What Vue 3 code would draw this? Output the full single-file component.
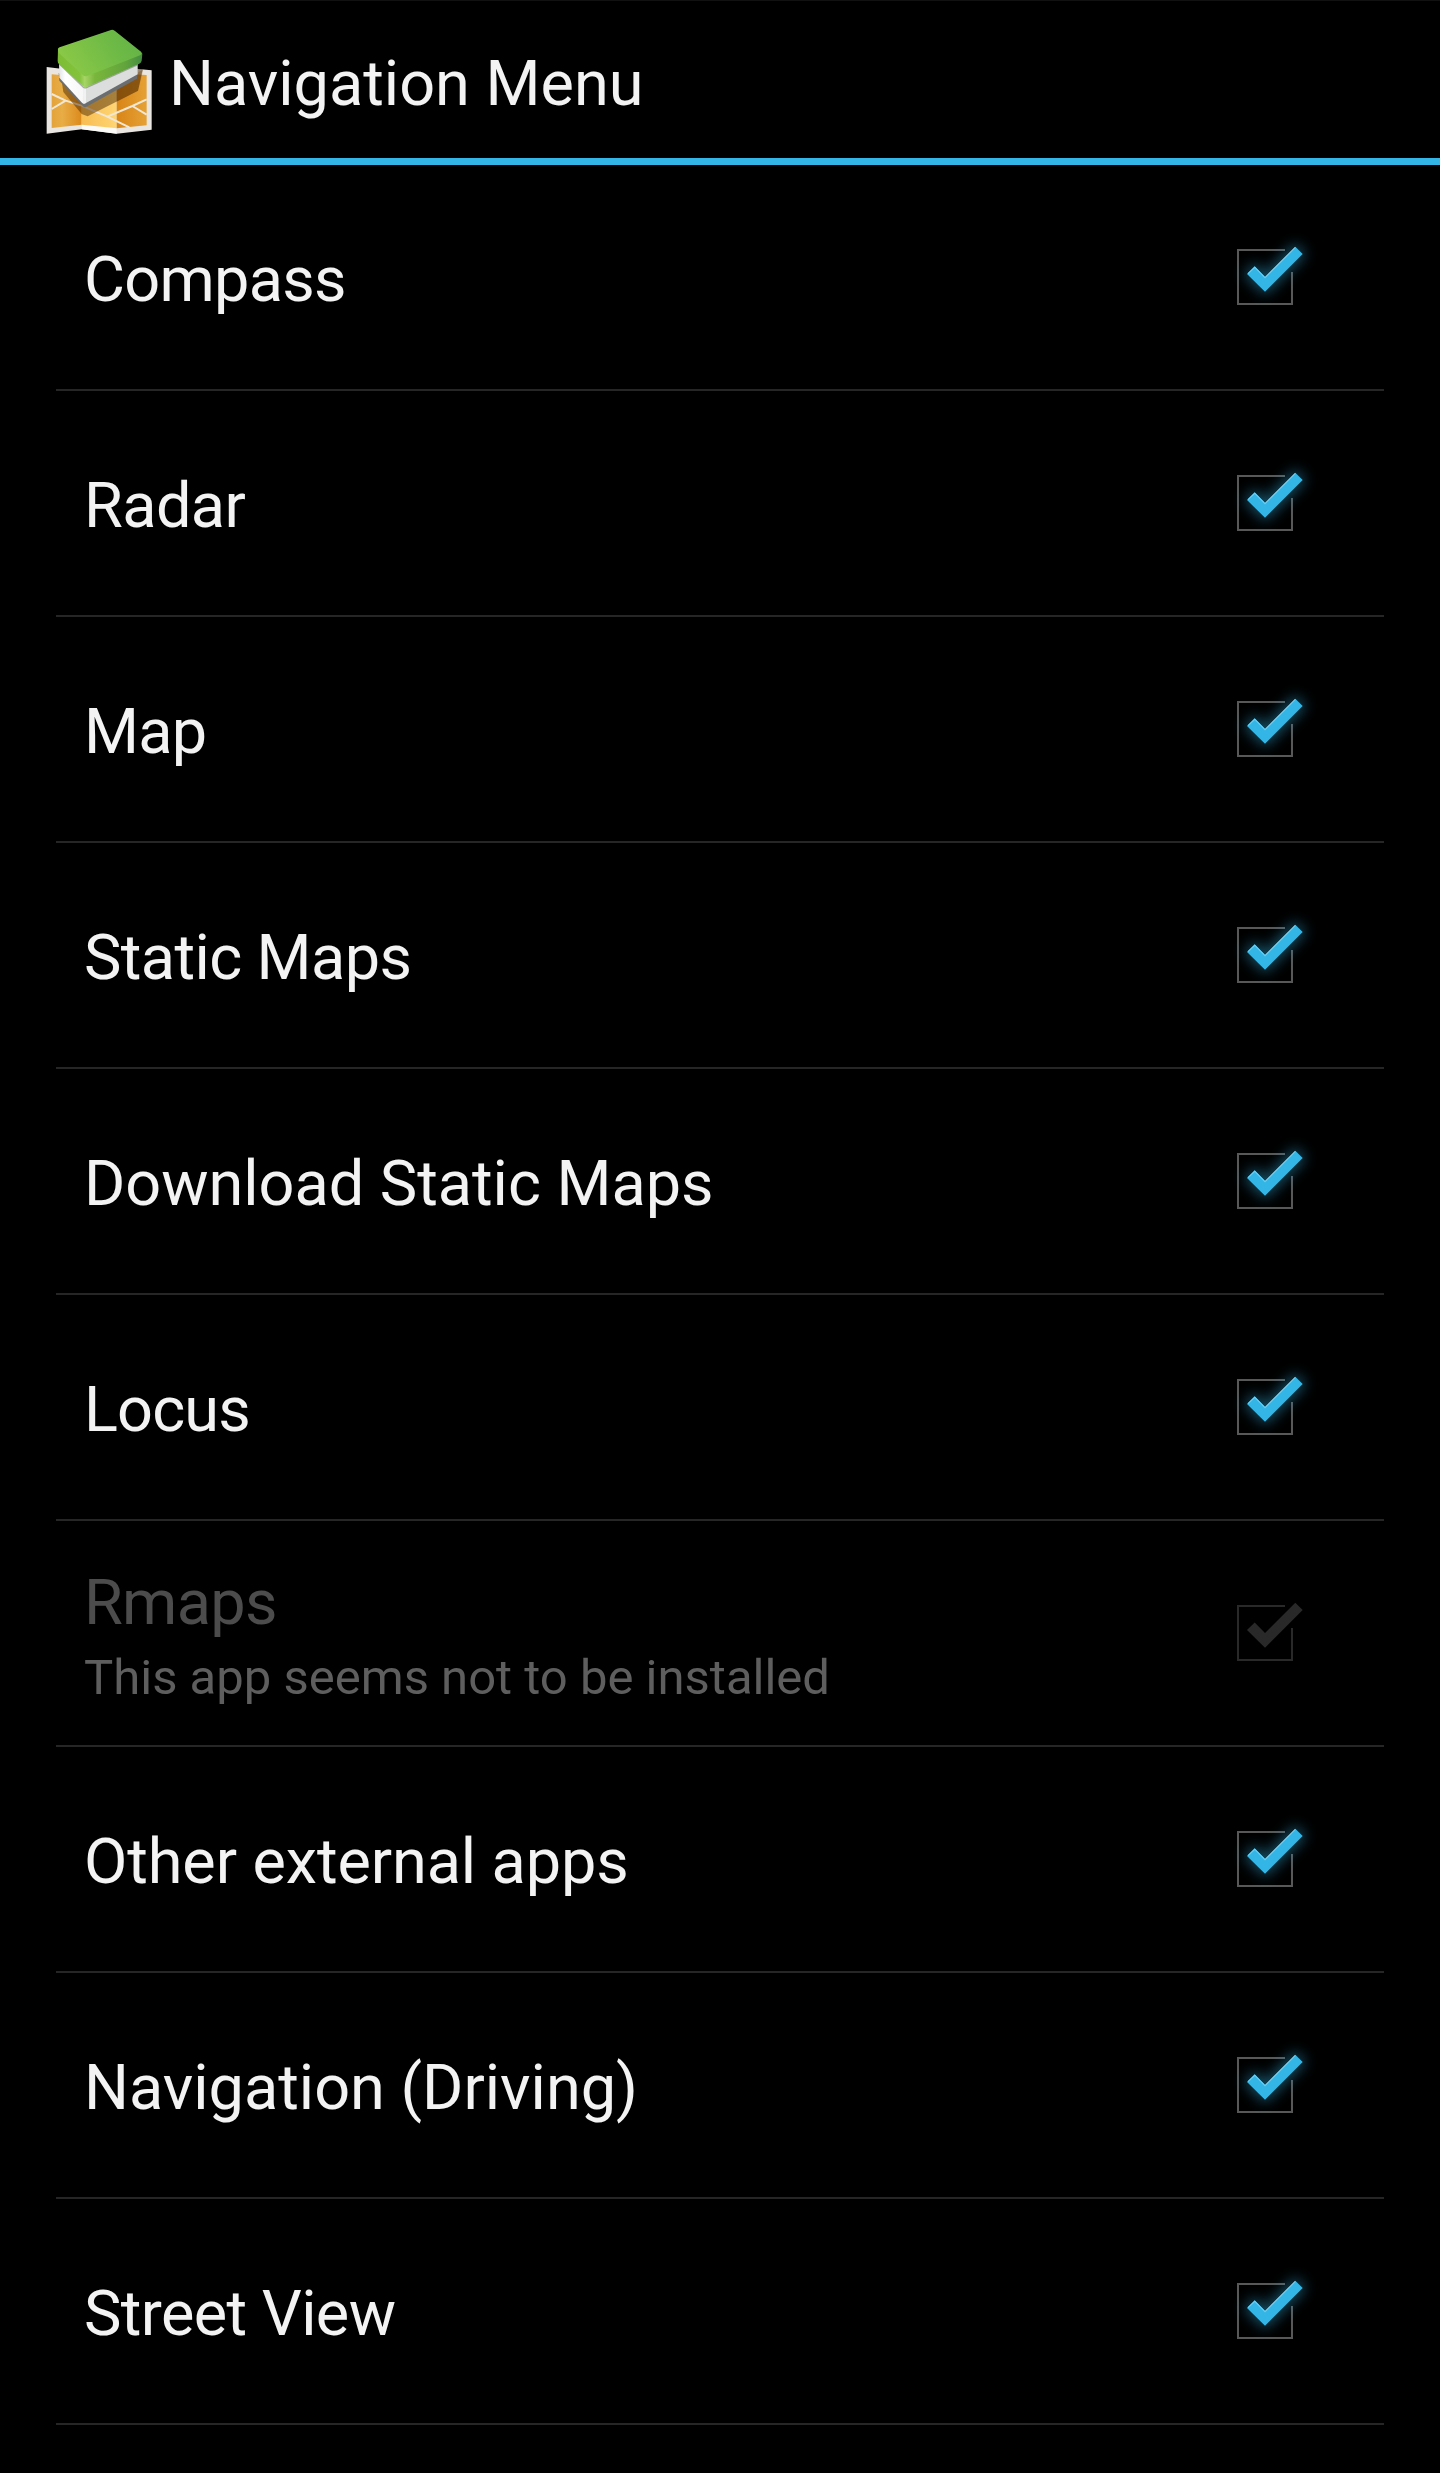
<script setup>
const items = [
  { title: 'Compass', tracking: -0.72 },
  { title: 'Radar', tracking: -0.6 },
  { title: 'Map', tracking: -0.7 },
  { title: 'Static Maps', tracking: -0.6 },
  { title: 'Download Static Maps', tracking: -0.03 },
  { title: 'Locus', tracking: -0.85 },
  { title: 'Rmaps', summary: 'This app seems not to be installed', disabled: true, tracking: -0.7 },
  { title: 'Other external apps', tracking: -0.1 },
  { title: 'Navigation (Driving)', tracking: 0 },
  { title: 'Street View', tracking: -0.6 },
]
</script>

<template>
  <div class="screen">
    <header class="bar">
      <svg class="logo" viewBox="30 30 360 360" aria-hidden="true">
        <defs>
          <linearGradient id="top" x1="0" y1="0.6" x2="1" y2="0.2">
            <stop offset="0" stop-color="#8cc947" />
            <stop offset="0.6" stop-color="#70bb46" />
            <stop offset="1" stop-color="#62b246" />
          </linearGradient>
          <linearGradient id="greenLeft" x1="0" y1="0" x2="1" y2="0">
            <stop offset="0" stop-color="#7cbd35" />
            <stop offset="0.75" stop-color="#84c23c" />
            <stop offset="1" stop-color="#b4de78" />
          </linearGradient>
          <linearGradient id="greenRight" x1="0" y1="0" x2="1" y2="0">
            <stop offset="0" stop-color="#a8d668" />
            <stop offset="0.18" stop-color="#7ab63c" />
            <stop offset="0.7" stop-color="#62a53c" />
            <stop offset="1" stop-color="#458d42" />
          </linearGradient>
          <linearGradient id="pages" x1="0" y1="0" x2="1" y2="0">
            <stop offset="0" stop-color="#e2e4e5" />
            <stop offset="0.25" stop-color="#ffffff" />
            <stop offset="1" stop-color="#f6f6f6" />
          </linearGradient>
          <linearGradient id="foldLeft" x1="0" y1="0" x2="1" y2="0">
            <stop offset="0" stop-color="#e4a33a" />
            <stop offset="0.35" stop-color="#e8ad46" />
            <stop offset="1" stop-color="#dc8a1b" />
          </linearGradient>
          <linearGradient id="foldMid" x1="0" y1="0" x2="1" y2="0">
            <stop offset="0" stop-color="#f7bd52" />
            <stop offset="1" stop-color="#ffd573" />
          </linearGradient>
          <linearGradient id="foldRight" x1="0" y1="0" x2="1" y2="0">
            <stop offset="0" stop-color="#d98516" />
            <stop offset="1" stop-color="#e5a136" />
          </linearGradient>
        </defs>
        <path d="M50 171L155 184L260 171L365 181V359L260 371L155 358L50 371Z" fill="#e9e6e1" />
        <path d="M155 184L260 171V371L155 358Z" fill="#fbfaf7" />
        <path d="M65 193L155 200V344L65 354Z" fill="url(#foldLeft)" />
        <path d="M155 200L260 190V355L155 344Z" fill="url(#foldMid)" />
        <path d="M260 190L350 195V346L260 355Z" fill="url(#foldRight)" />
        <path d="M65 252L107 272L155 287L232 320L298 352M65 297L107 272M232 320L307 288L350 268M307 288L350 314" fill="none" stroke="#f1e7d6" stroke-width="6" />
        <path d="M94 206L162 281L318 190L322 176L338 178L324 242L173 319L155 312L100 246Z" fill="#4d2c05" fill-opacity="0.5" />
        <path d="M260 228L340 178L324 242L260 275Z" fill="#6b3900" fill-opacity="0.3" />
        <path d="M86 188L163 268L323 178L321 206L168 291Q163 293 159 289L88 212Z" fill="#6a6e71" />
        <path d="M87 156L162 228V281Q159 281 156 278L88 203Z" fill="url(#pages)" />
        <path d="M161 228L323 154V193L168 279Q164 282 161 281Z" fill="#dcdede" />
        <path d="M161 230V281L168 279V230Z" fill="#f0f1f1" />
        <path d="M88 162L160 232Q164 235 171 232L322 165" fill="none" stroke="#777b78" stroke-opacity="0.6" stroke-width="4" />
        <path d="M84 116L158 191L171 195V231Q165 234 159 229L86 161Q83 158 83 152Z" fill="url(#greenLeft)" />
        <path d="M163 190L178 191L331 131Q337 127 337 132L335 152Q334 158 328 161L176 229Q169 232 163 231Z" fill="url(#greenRight)" />
        <path d="M84 120Q82 114 91 111L243 60Q250 57 256 64L334 126Q338 131 332 135L174 197Q165 201 158 195L86 128Z" fill="url(#top)" />
      </svg>
      <h1 class="heading">Navigation Menu</h1>
    </header>

    <ul class="list">
      <li v-for="item in items" :key="item.title" class="row" :class="{ disabled: item.disabled }">
        <div class="labels">
          <div class="title" :style="{ letterSpacing: item.tracking + 'px' }">{{ item.title }}</div>
          <div v-if="item.summary" class="summary">{{ item.summary }}</div>
        </div>
        <svg class="check" viewBox="0 1 130 112" aria-hidden="true">
          <path class="frame" d="M75 30H28V84H82V52" />
          <path v-if="!item.disabled" class="glow" d="M37 54L44.7 46.5L55 57L85.3 26.7L92.7 34L55 71.7Z" />
          <path class="tick" d="M37 54L44.7 46.5L55 57L85.3 26.7L92.7 34L55 71.7Z" />
          <path v-if="!item.disabled" class="shine" d="M38 53.6L44.7 47.2L55 57.7L85.3 27.4" />
        </svg>
      </li>
    </ul>
  </div>
</template>

<style>
body {
  margin: 0;
  background: #000;
}
</style>

<style scoped>
.screen {
  height: 2473px;
  overflow: hidden;
  background: #000;
  color: #f3f3f3;
  font-family: Roboto, sans-serif;
}
.bar {
  box-sizing: border-box;
  height: 165px;
  display: flex;
  align-items: center;
  gap: 9px;
  padding-left: 40px;
  border-top: 1px solid #111;
  border-bottom: 7px solid #33b5e5;
}
.logo {
  width: 120px;
  height: 120px;
}
.heading {
  margin: 9px 0 0;
  font-size: 63px;
  font-weight: 400;
  line-height: 84px;
}
.list {
  margin: 0;
  padding: 0 56px;
  list-style: none;
}
.row {
  box-sizing: border-box;
  height: 226px;
  display: flex;
  align-items: center;
  justify-content: space-between;
  padding: 0 44px 0 28px;
  border-bottom: 2px solid #262626;
}
.title {
  padding-top: 6px;
  font-size: 63px;
  line-height: 80px;
  white-space: nowrap;
}
.summary {
  margin-bottom: -2px;
  padding-top: 2px;
  font-size: 49px;
  line-height: 66px;
  color: #5e5e5e;
  white-space: nowrap;
}
.disabled .title {
  color: #4c4c4c;
}
.check {
  width: 130px;
  height: 112px;
  flex: none;
  overflow: visible;
}
.frame {
  fill: none;
  stroke: #585858;
  stroke-width: 2;
}
.tick {
  fill: #33b5e5;
}
.glow {
  fill: #33b5e5;
  stroke: #33b5e5;
  stroke-width: 5;
  opacity: 0.45;
  filter: blur(7px);
}
.shine {
  fill: none;
  stroke: #6fcdf0;
  stroke-width: 1.2;
}
.disabled .frame {
  stroke: #292929;
}
.disabled .tick {
  fill: #292929;
}
</style>
